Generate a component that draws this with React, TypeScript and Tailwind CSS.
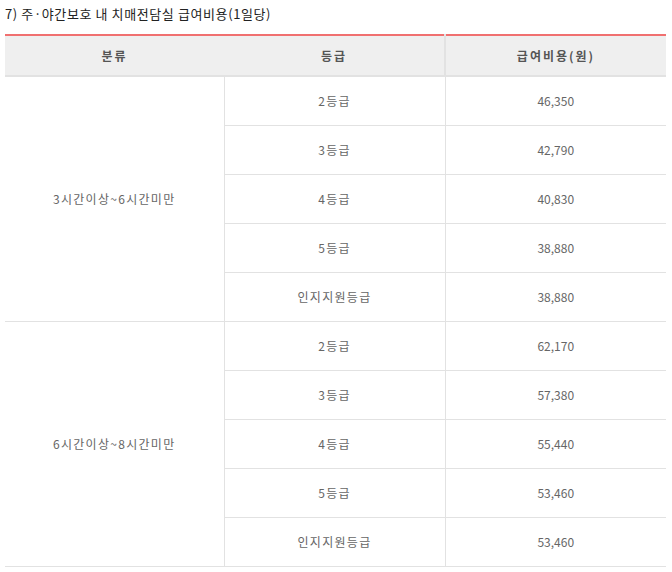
import React from 'react';

type Group = {
  label: string;
  rows: { grade: string; cost: string }[];
};

const groups: Group[] = [
  {
    label: '3시간이상~6시간미만',
    rows: [
      { grade: '2등급', cost: '46,350' },
      { grade: '3등급', cost: '42,790' },
      { grade: '4등급', cost: '40,830' },
      { grade: '5등급', cost: '38,880' },
      { grade: '인지지원등급', cost: '38,880' },
    ],
  },
  {
    label: '6시간이상~8시간미만',
    rows: [
      { grade: '2등급', cost: '62,170' },
      { grade: '3등급', cost: '57,380' },
      { grade: '4등급', cost: '55,440' },
      { grade: '5등급', cost: '53,460' },
      { grade: '인지지원등급', cost: '53,460' },
    ],
  },
];

const App: React.FC = () => {
  return (
    <div
      className="bg-white w-[672px] h-[572px] overflow-hidden pl-[5px] pr-[6px]"
      style={{ fontFamily: '"Noto Sans CJK KR", "Noto Sans", sans-serif' }}
    >
      <div className="h-[34px] pt-[5px] text-[13px] leading-[18px] text-[#222] tracking-[0.6px]">
        7) 주·야간보호 내 치매전담실 급여비용(1일당)
      </div>
      <table className="w-[661px] border-collapse table-fixed border-t-2 border-[#f07070]">
        <colgroup>
          <col className="w-[219px]" />
          <col className="w-[221px]" />
          <col className="w-[221px]" />
        </colgroup>
        <thead>
          <tr className="h-[41px] bg-[#efefef]">
            <th className="border-b-2 border-[#e2e2e2] text-[12px] font-bold text-[#555] tracking-[2px] p-0">분류</th>
            <th className="border-b-2 border-r-2 border-[#e2e2e2] text-[12px] font-bold text-[#555] tracking-[2px] p-0">등급</th>
            <th className="border-b-2 border-[#e2e2e2] text-[12px] font-bold text-[#555] tracking-[2px] p-0">급여비용(원)</th>
          </tr>
        </thead>
        <tbody>
          {groups.map((group) =>
            group.rows.map((row, i) => (
              <tr key={group.label + row.grade} className="h-[49px]">
                {i === 0 && (
                  <td
                    rowSpan={group.rows.length}
                    className="border-b border-r border-[#e2e2e2] text-center text-[12px] text-[#666] tracking-[1.3px] p-0"
                  >
                    {group.label}
                  </td>
                )}
                <td className="border-b border-r border-[#e2e2e2] text-center text-[12px] text-[#666] tracking-[1.3px] p-0">
                  {row.grade}
                </td>
                <td className="border-b border-[#e2e2e2] text-center text-[12px] text-[#666] p-0">
                  {row.cost}
                </td>
              </tr>
            ))
          )}
        </tbody>
      </table>
    </div>
  );
};

export default App;
